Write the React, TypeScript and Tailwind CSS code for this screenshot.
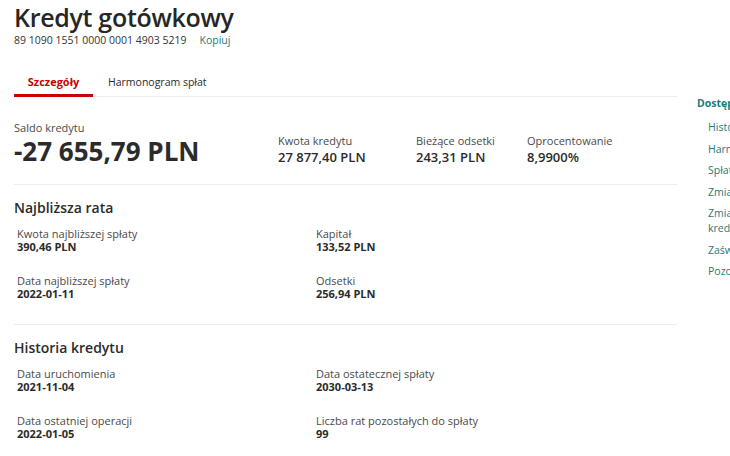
import React from "react";

const font = { fontFamily: '"Open Sans", "Noto Sans", sans-serif' };

function Field({ label, value }: { label: string; value: string }) {
  return (
    <div className="flex flex-col">
      <span className="text-[11px] leading-[12px] text-[#4a4a4a]">{label}</span>
      <span className="text-[11px] leading-[13px] font-bold text-[#2b2b2b]">{value}</span>
    </div>
  );
}

function Section({ title, rows }: { title: string; rows: [string, string][][] }) {
  return (
    <div className="pt-[14px]">
      <h2 className="text-[14px] leading-[18px] font-semibold text-[#2b2b2b]">{title}</h2>
      <div className="mt-[11px] ml-[3px] grid grid-cols-[299px_1fr] gap-y-[22px]">
        {rows.flat().map(([l, v]) => (
          <Field key={l} label={l} value={v} />
        ))}
      </div>
    </div>
  );
}

export default function App() {
  return (
    <div className="flex w-[730px] h-[456px] overflow-hidden bg-white" style={font}>
      <div className="ml-[14px] w-[663px] shrink-0">
        <h1 className="mt-[1px] text-[25px] leading-[32px] font-semibold tracking-[-0.3px] text-[#262626]">
          Kredyt gotówkowy
        </h1>
        <div className="flex items-center text-[10.5px] leading-[14px] text-[#333]">
          <span>89 1090 1551 0000 0001 4903 5219</span>
          <span className="ml-[13px] text-[#1f7a7a]">Kopiuj</span>
        </div>
        <div className="mt-[27px] flex border-b border-[#ececec]">
          <div className="w-[79px] border-b-[3px] border-[#cc0000] pb-[4px] text-center text-[11px] leading-[16px] font-bold text-[#cc0000] -mb-[1px]">
            Szczegóły
          </div>
          <div className="ml-[15px] pb-[4px] text-[10.5px] leading-[16px] font-medium text-[#2b2b2b]">
            Harmonogram spłat
          </div>
        </div>
        <div className="mt-[24px] flex items-start border-b border-[#ececec] pb-[17px]">
          <div className="w-[264px]">
            <div className="text-[11px] leading-[14px] text-[#4a4a4a]">Saldo kredytu</div>
            <div className="text-[26px] leading-[32px] font-bold text-[#2b2b2b]">-27 655,79 PLN</div>
          </div>
          <div className="mt-[13px] w-[138px]">
            <div className="text-[11px] leading-[14px] text-[#4a4a4a]">Kwota kredytu</div>
            <div className="text-[13px] leading-[18px] font-semibold text-[#2b2b2b]">27 877,40 PLN</div>
          </div>
          <div className="mt-[13px] w-[111px]">
            <div className="text-[11px] leading-[14px] text-[#4a4a4a]">Bieżące odsetki</div>
            <div className="text-[13px] leading-[18px] font-semibold text-[#2b2b2b]">243,31 PLN</div>
          </div>
          <div className="mt-[13px]">
            <div className="text-[11px] leading-[14px] text-[#4a4a4a]">Oprocentowanie</div>
            <div className="text-[13px] leading-[18px] font-semibold text-[#2b2b2b]">8,9900%</div>
          </div>
        </div>
        <div className="border-b border-[#ececec] pb-[24px]">
          <Section
            title="Najbliższa rata"
            rows={[
              [["Kwota najbliższej spłaty", "390,46 PLN"], ["Kapitał", "133,52 PLN"]],
              [["Data najbliższej spłaty", "2022-01-11"], ["Odsetki", "256,94 PLN"]],
            ]}
          />
        </div>
        <Section
          title="Historia kredytu"
          rows={[
            [["Data uruchomienia", "2021-11-04"], ["Data ostatecznej spłaty", "2030-03-13"]],
            [["Data ostatniej operacji", "2022-01-05"], ["Liczba rat pozostałych do spłaty", "99"]],
          ]}
        />
      </div>
      <div className="ml-[20px] mt-[96px] w-[200px] shrink-0 text-[10.5px] text-[#1f7a7a]">
        <div className="font-bold leading-[14px]">Dostępne opcje</div>
        <ul className="ml-[11px] mt-[10px] flex flex-col gap-[6.5px] leading-[15px]">
          <li>Historia operacji</li>
          <li>Harmonogram spłat</li>
          <li>Spłata kredytu</li>
          <li>Zmiana daty spłaty</li>
          <li className="w-[110px]">Zmiana parametrów kredytu</li>
          <li>Zaświadczenia</li>
          <li>Pozostałe</li>
        </ul>
      </div>
    </div>
  );
}
